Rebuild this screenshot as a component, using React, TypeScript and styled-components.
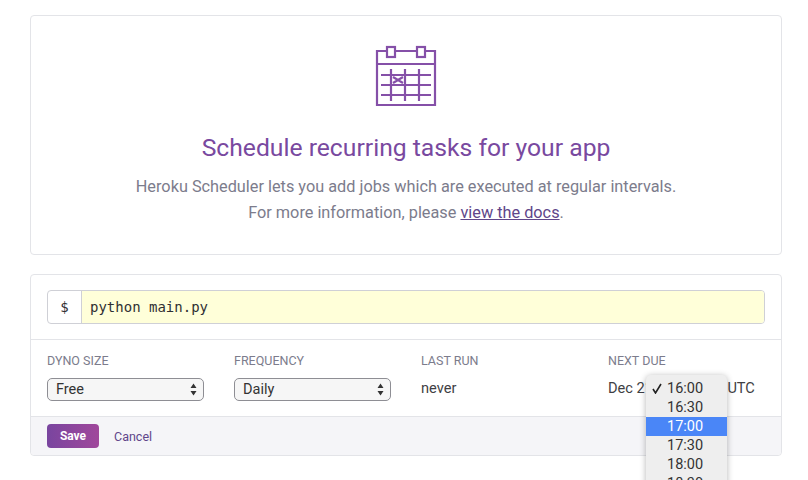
import styled, { createGlobalStyle } from "styled-components";

const Global = createGlobalStyle`
  html, body {
    margin: 0;
    height: 480px;
    overflow: hidden;
    background: #fff;
  }
  body {
    font-family: Roboto, "Liberation Sans", sans-serif;
    color: #3f3f44;
  }
`;

const Page = styled.div`
  width: 752px;
  padding: 15px 0 0 30px;
  display: flex;
  flex-direction: column;
  gap: 19px;
`;

const Card = styled.section`
  border: 1px solid #e3e4e8;
  border-radius: 4px;
  background: #fff;
`;

const Intro = styled(Card)`
  height: 240px;
  box-sizing: border-box;
  display: flex;
  flex-direction: column;
  align-items: center;
  padding-top: 29px;
`;

const Title = styled.h1`
  margin: 23px 0 0;
  font-size: 24.7px;
  font-weight: 400;
  line-height: 36px;
  color: #79499f;
`;

const Copy = styled.p`
  margin: 8px 0 0;
  font-size: 16.3px;
  line-height: 26px;
  color: #7c7c8c;
  text-align: center;
`;

const DocLink = styled.a`
  color: #60468a;
  text-decoration: underline;
`;

const CommandRow = styled.div`
  padding: 15px 16px;
  border-bottom: 1px solid #e3e4e8;
`;

const InputGroup = styled.div`
  display: flex;
  height: 34px;
  box-sizing: border-box;
  border: 1px solid #cfd0d6;
  border-radius: 4px;
  overflow: hidden;
  font-family: "DejaVu Sans Mono", monospace;
  font-size: 14px;
  color: #2f2f33;
`;

const Prompt = styled.span`
  width: 33px;
  display: flex;
  align-items: center;
  justify-content: center;
  border-right: 1px solid #cfd0d6;
`;

const Command = styled.span`
  flex: 1;
  display: flex;
  align-items: center;
  padding-left: 8px;
  background: #ffffd9;
`;

const Meta = styled.div`
  display: grid;
  grid-template-columns: repeat(4, 187px);
  height: 76px;
  box-sizing: border-box;
  padding: 14px 16px 0;
`;

const Field = styled.div`
  display: flex;
  flex-direction: column;
`;

const Label = styled.span`
  font-size: 12.5px;
  line-height: 14px;
  color: #7c7c8c;
`;

const FakeSelect = styled.div`
  width: 157px;
  height: 23px;
  margin-top: 10px;
  box-sizing: border-box;
  display: flex;
  align-items: center;
  justify-content: space-between;
  padding: 0 6px 1px 8px;
  border: 1px solid #8e8e94;
  border-radius: 5px;
  background: #f6f6f6;
  font-size: 14.5px;
  color: #333;
`;

const Value = styled.span`
  margin-top: 10px;
  font-size: 14.6px;
  line-height: 20px;
  color: #3f3f44;
  white-space: nowrap;
`;

const Zone = styled.span`
  margin-left: 8px;
`;

const Footer = styled.div`
  display: flex;
  align-items: center;
  gap: 15px;
  height: 38px;
  padding-left: 16px;
  background: #f5f5f8;
  border-top: 1px solid #e3e4e8;
  border-radius: 0 0 4px 4px;
`;

const SaveButton = styled.button`
  width: 52px;
  height: 24px;
  padding: 0;
  border: 0;
  border-radius: 4px;
  background: linear-gradient(to right, #79459f, #a0479b);
  color: #fff;
  font: 700 12px Roboto, sans-serif;
`;

const CancelLink = styled.a`
  font-size: 12.5px;
  color: #60468a;
`;

const TimeMenu = styled.ul`
  position: absolute;
  left: 646px;
  top: 375px;
  width: 81px;
  margin: 0;
  padding: 4px 0 0;
  list-style: none;
  background: #eeeeee;
  border-radius: 5px 5px 0 0;
  box-shadow: 0 1px 6px rgba(0, 0, 0, 0.3);
`;

const TimeItem = styled.li<{ $active?: boolean }>`
  position: relative;
  height: 19px;
  line-height: 19px;
  padding-left: 21px;
  font-size: 14.5px;
  background: ${(p) => (p.$active ? "#4a86f7" : "transparent")};
  color: ${(p) => (p.$active ? "#fff" : "#333")};
`;

const CheckMark = styled.svg`
  position: absolute;
  left: 6px;
  top: 4px;
`;

const Arrows = () => (
  <svg width="7" height="13" viewBox="0 0 7 13">
    <path d="M3.5 0.5 L6.5 5 H0.5 Z M3.5 12.5 L6.5 8 H0.5 Z" fill="#333" />
  </svg>
);

const CalendarIcon = () => (
  <svg width="62" height="62" viewBox="0 0 62 62" fill="none" stroke="#8550a8" strokeWidth="2.2">
    <path d="M12 6 H2 V60 H60 V6 H50 M20 6 H42" />
    <path d="M2 19 H60" />
    <rect x="12" y="2" width="8" height="10" />
    <rect x="42" y="2" width="8" height="10" />
    <path d="M6 30 H56 M6 40 H56 M6 50 H56" />
    <path d="M16 24 V56 M30 24 V56 M44 24 V56" />
    <path d="M18 32 L28 38 M28 32 L18 38" />
  </svg>
);

const times = ["16:00", "16:30", "17:00", "17:30", "18:00", "18:30"];

export default function App() {
  return (
    <Page>
      <Global />
      <Intro>
        <CalendarIcon />
        <Title>Schedule recurring tasks for your app</Title>
        <Copy>
          Heroku Scheduler lets you add jobs which are executed at regular intervals.
          <br />
          For more information, please <DocLink>view the docs</DocLink>.
        </Copy>
      </Intro>
      <Card>
        <CommandRow>
          <InputGroup>
            <Prompt>$</Prompt>
            <Command>python main.py</Command>
          </InputGroup>
        </CommandRow>
        <Meta>
          <Field>
            <Label>DYNO SIZE</Label>
            <FakeSelect>
              Free
              <Arrows />
            </FakeSelect>
          </Field>
          <Field>
            <Label>FREQUENCY</Label>
            <FakeSelect>
              Daily
              <Arrows />
            </FakeSelect>
          </Field>
          <Field>
            <Label>LAST RUN</Label>
            <Value>never</Value>
          </Field>
          <Field>
            <Label>NEXT DUE</Label>
            <Value>
              Dec 21, 16:00:00 <Zone>UTC</Zone>
            </Value>
          </Field>
        </Meta>
        <Footer>
          <SaveButton>Save</SaveButton>
          <CancelLink>Cancel</CancelLink>
        </Footer>
      </Card>
      <TimeMenu>
        {times.map((t, i) => (
          <TimeItem key={t} $active={t === "17:00"}>
            {i === 0 && (
              <CheckMark width="10" height="11" viewBox="0 0 10 11">
                <path d="M1 6 L3.5 10 L9 1" fill="none" stroke="#222" strokeWidth="1.6" />
              </CheckMark>
            )}
            {t}
          </TimeItem>
        ))}
      </TimeMenu>
    </Page>
  );
}
